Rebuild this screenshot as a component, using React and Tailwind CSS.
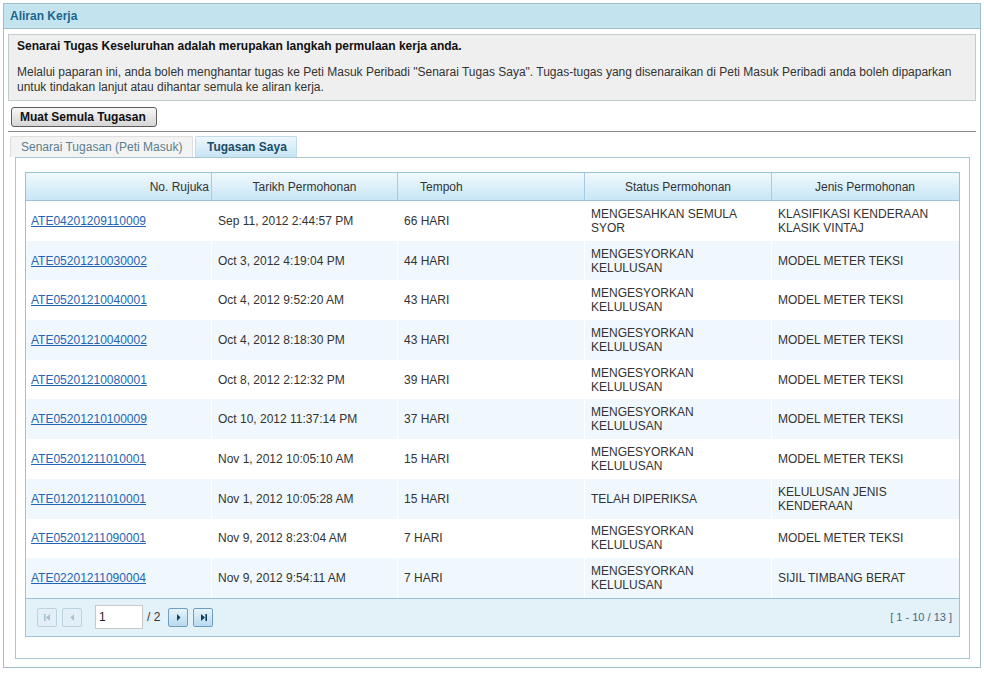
import React from "react";

const rows = [
  ["ATE04201209110009", "Sep 11, 2012 2:44:57 PM", "66 HARI", ["MENGESAHKAN SEMULA", "SYOR"], ["KLASIFIKASI KENDERAAN", "KLASIK VINTAJ"]],
  ["ATE05201210030002", "Oct 3, 2012 4:19:04 PM", "44 HARI", ["MENGESYORKAN", "KELULUSAN"], ["MODEL METER TEKSI"]],
  ["ATE05201210040001", "Oct 4, 2012 9:52:20 AM", "43 HARI", ["MENGESYORKAN", "KELULUSAN"], ["MODEL METER TEKSI"]],
  ["ATE05201210040002", "Oct 4, 2012 8:18:30 PM", "43 HARI", ["MENGESYORKAN", "KELULUSAN"], ["MODEL METER TEKSI"]],
  ["ATE05201210080001", "Oct 8, 2012 2:12:32 PM", "39 HARI", ["MENGESYORKAN", "KELULUSAN"], ["MODEL METER TEKSI"]],
  ["ATE05201210100009", "Oct 10, 2012 11:37:14 PM", "37 HARI", ["MENGESYORKAN", "KELULUSAN"], ["MODEL METER TEKSI"]],
  ["ATE05201211010001", "Nov 1, 2012 10:05:10 AM", "15 HARI", ["MENGESYORKAN", "KELULUSAN"], ["MODEL METER TEKSI"]],
  ["ATE01201211010001", "Nov 1, 2012 10:05:28 AM", "15 HARI", ["TELAH DIPERIKSA"], ["KELULUSAN JENIS", "KENDERAAN"]],
  ["ATE05201211090001", "Nov 9, 2012 8:23:04 AM", "7 HARI", ["MENGESYORKAN", "KELULUSAN"], ["MODEL METER TEKSI"]],
  ["ATE02201211090004", "Nov 9, 2012 9:54:11 AM", "7 HARI", ["MENGESYORKAN", "KELULUSAN"], ["SIJIL TIMBANG BERAT"]],
];

function Lines({ lines }) {
  return (
    <div className="leading-[14px]">
      {lines.map((l, i) => (
        <div key={i}>{l}</div>
      ))}
    </div>
  );
}

function PagerBtn({ kind, enabled }) {
  const c = enabled ? "#123f5e" : "#a7c2d0";
  const shapes = {
    first: (
      <>
        <rect x="1" y="1" width="1.6" height="7" fill={c} />
        <path d="M7 1 L3 4.5 L7 8 Z" fill={c} />
      </>
    ),
    prev: <path d="M6 1 L2.5 4.5 L6 8 Z" fill={c} />,
    next: <path d="M3 1 L6.5 4.5 L3 8 Z" fill={c} />,
    last: (
      <>
        <path d="M2 1 L6 4.5 L2 8 Z" fill={c} />
        <rect x="6.4" y="1" width="1.6" height="7" fill={c} />
      </>
    ),
  };
  return (
    <div
      className={
        enabled
          ? "w-[20px] h-[19px] flex items-center justify-center rounded-[2px] border border-[#6f9fbf] bg-gradient-to-b from-[#e6f3fb] to-[#b9daf0]"
          : "w-[20px] h-[19px] flex items-center justify-center rounded-[2px] border border-[#bcd3df] bg-[#e2eff6]"
      }
    >
      <svg width="9" height="9" viewBox="0 0 9 9">
        {shapes[kind]}
      </svg>
    </div>
  );
}

export default function App() {
  return (
    <div className="w-[984px] h-[674px] bg-white pt-[3px] pl-[3px] font-['Liberation_Sans',Arial,sans-serif] text-[12px] text-[#333]">
      <div className="w-[978px] h-[665px] border border-[#9fbfcc] flex flex-col">
        {/* Title bar */}
        <div className="h-[25px] shrink-0 bg-[#c3e4ee] border-b border-[#9fbfcc] flex items-center pl-[6px] font-bold text-[#1b6690]">
          Aliran Kerja
        </div>

        <div className="px-[4px] flex flex-col">
          {/* Info box */}
          <div className="mt-[5px] h-[67px] border border-[#c2cbd0] bg-[#efefef] pl-[8px] pt-[4px]">
            <div className="font-bold text-[#111] leading-[15px]">
              Senarai Tugas Keseluruhan adalah merupakan langkah permulaan kerja anda.
            </div>
            <div className="mt-[11px] leading-[15px] text-[#333] whitespace-nowrap">
              Melalui paparan ini, anda boleh menghantar tugas ke Peti Masuk Peribadi "Senarai Tugas Saya". Tugas-tugas yang disenaraikan di Peti Masuk Peribadi anda boleh dipaparkan
              <br />
              untuk tindakan lanjut atau dihantar semula ke aliran kerja.
            </div>
          </div>

          {/* Button */}
          <div className="mt-[6px] ml-[3px]">
            <button className="h-[20px] w-[146px] rounded-[3px] border border-[#5e5e5e] bg-gradient-to-b from-[#f7f7f7] to-[#d6d6d6] text-left pl-[8px] font-bold text-[#111] leading-[18px]">
              Muat Semula Tugasan
            </button>
          </div>

          {/* Separator */}
          <div className="mt-[4px] border-t border-[#8a8a8a]" />

          {/* Tabs */}
          <div className="mt-[4px] ml-[2px] flex gap-[2px] h-[21px]">
            <div className="w-[183px] h-[21px] bg-[#f3f3f3] border border-b-0 border-[#dedede] rounded-t-[2px] pl-[10px] flex items-center text-[#5a7e8e]">
              Senarai Tugasan (Peti Masuk)
            </div>
            <div className="w-[102px] h-[21px] bg-gradient-to-b from-[#eef7fc] to-[#c6e5f4] border border-b-0 border-[#c0dcea] rounded-t-[2px] pl-[11px] flex items-center font-bold text-[#1b4c68]">
              Tugasan Saya
            </div>
          </div>

          {/* Tab panel */}
          <div className="ml-[7px] mr-[6px] h-[502px] border border-[#a9c7d2] pt-[14px] pl-[9px]">
            <div className="w-[935px] border border-[#9cc2d6]">
              {/* Header */}
              <div className="grid grid-cols-[186px_186px_187px_187px_186px] h-[28px] bg-gradient-to-b from-[#f1f9fd] to-[#c8e6f6] border-b border-[#9cc2d6] text-[#333]">
                <div className="border-r border-[#a7cbe0] flex items-center justify-end pr-[2px] overflow-hidden whitespace-nowrap">No. Rujuka</div>
                <div className="border-r border-[#a7cbe0] flex items-center justify-center">Tarikh Permohonan</div>
                <div className="border-r border-[#a7cbe0] flex items-center pl-[22px]">Tempoh</div>
                <div className="border-r border-[#a7cbe0] flex items-center justify-center">Status Permohonan</div>
                <div className="flex items-center justify-center">Jenis Permohonan</div>
              </div>

              {/* Rows */}
              {rows.map((r, i) => (
                <div
                  key={r[0]}
                  className={
                    "grid grid-cols-[186px_186px_187px_187px_186px] h-[39.7px] " +
                    (i % 2 === 1 ? "bg-[#f0f8fd]" : "bg-white")
                  }
                >
                  <div className="border-r border-white flex items-center pl-[5px]">
                    <a href="#" className="text-[#2463b4] underline">{r[0]}</a>
                  </div>
                  <div className="border-r border-white flex items-center pl-[6px]">{r[1]}</div>
                  <div className="border-r border-white flex items-center pl-[6px]">{r[2]}</div>
                  <div className="border-r border-white flex items-center pl-[6px]">
                    <Lines lines={r[3]} />
                  </div>
                  <div className="flex items-center pl-[6px]">
                    <Lines lines={r[4]} />
                  </div>
                </div>
              ))}

              {/* Footer / pager */}
              <div className="h-[38px] bg-[#e3f1f9] border-t border-[#9cc2d6] flex items-center pl-[11px] pr-[7px]">
                <PagerBtn kind="first" enabled={false} />
                <div className="ml-[5px]">
                  <PagerBtn kind="prev" enabled={false} />
                </div>
                <div className="ml-[13px] w-[48px] h-[24px] bg-white border border-[#c9c9c9] flex items-center pl-[3px] text-[#222]">
                  1
                </div>
                <div className="ml-[4px] text-[#333]">/ 2</div>
                <div className="ml-[8px]">
                  <PagerBtn kind="next" enabled={true} />
                </div>
                <div className="ml-[5px]">
                  <PagerBtn kind="last" enabled={true} />
                </div>
                <div className="ml-auto text-[11px] text-[#3e6b86]">[ 1 - 10 / 13 ]</div>
              </div>
            </div>
          </div>
        </div>
      </div>
    </div>
  );
}
